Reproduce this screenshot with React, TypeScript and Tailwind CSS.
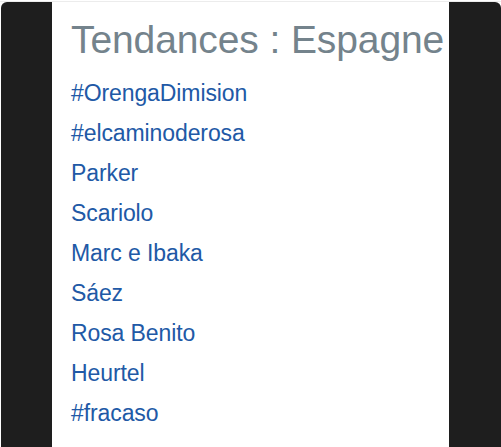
const trends = [
  "#OrengaDimision",
  "#elcaminoderosa",
  "Parker",
  "Scariolo",
  "Marc e Ibaka",
  "Sáez",
  "Rosa Benito",
  "Heurtel",
  "#fracaso",
];

export default function App() {
  return (
    <div className="w-[501px] h-[447px] overflow-hidden bg-white flex flex-col">
      <div className="h-[1px] bg-white" />
      <div className="h-[1px] bg-[#ececec]" />
      <div className="flex flex-1 pl-[1px]">
        <div className="w-[51px] bg-[#1e1e1e] rounded-tl-[6px]" />
        <div
          className="flex-1 bg-white pl-[19px]"
          style={{ fontFamily: "'Liberation Sans', Arial, sans-serif" }}
        >
          <h1 className="text-[39px] leading-[40px] mt-[18px] text-[#74838c] font-light tracking-[-0.1px] whitespace-nowrap">
            Tendances : Espagne
          </h1>
          <ul className="mt-[13px]">
            {trends.map((t) => (
              <li
                key={t}
                className="text-[23px] leading-[40px] text-[#2159a6] tracking-[-0.1px] whitespace-nowrap"
              >
                {t}
              </li>
            ))}
          </ul>
        </div>
        <div className="w-[52px] bg-[#1e1e1e] rounded-tr-[6px]" />
      </div>
    </div>
  );
}
